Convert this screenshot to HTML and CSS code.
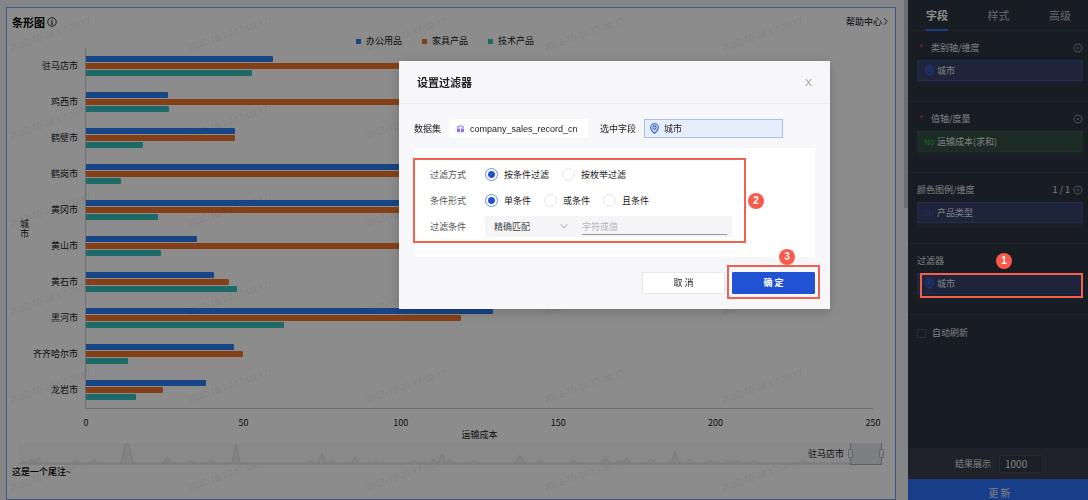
FILE: index.html
```html
<!DOCTYPE html>
<html lang="zh-CN">
<head>
  <meta charset="UTF-8" />
  <meta name="viewport" content="width=device-width, initial-scale=1.0" />
  <title>条形图</title>
  <link rel="stylesheet" href="styles.css">
</head>
<body>

  <svg class="defs" width="0" height="0" aria-hidden="true">
    <symbol id="pin" viewBox="0 0 16 16">
      <path d="M8 15C5 12.400 2.400 9.800 2.400 6.600a5.600 5.600 0 0 1 11.200 0C13.600 9.800 11 12.400 8 15z" fill="none" stroke="currentColor" stroke-width="1.500" />
      <circle cx="8" cy="6.600" r="2.400" fill="none" stroke="currentColor" stroke-width="1.500" />
    </symbol>
    <symbol id="gear" viewBox="0 0 16 16">
      <path d="M1 8l3.500-6h7L15 8l-3.500 6h-7z" fill="none" stroke="currentColor" stroke-width="1.500" stroke-linejoin="round" />
      <circle cx="8" cy="8" r="1.600" fill="currentColor" />
    </symbol>
  </svg>

  <div class="shell">
    <main class="canvas">
      <section class="card">
        <svg class="watermark" aria-hidden="true">
          <defs>
            <pattern id="mark" width="178" height="88" patternUnits="userSpaceOnUse">
              <text x="4" y="43" transform="rotate(-19 4 43)">2022-10-24 17:00:17</text>
            </pattern>
          </defs>
          <rect width="100%" height="100%" fill="url(#mark)" />
        </svg>

        <header class="card-head">
          <h1>条形图</h1>
          <svg class="info" viewBox="0 0 16 16" fill="none" stroke="currentColor" stroke-width="1.300">
            <circle cx="8" cy="8" r="6.800" />
            <path d="M8 7v4.500M8 4.300v1.600M6.600 7.200H8M6.500 11.500h3" />
          </svg>
          <a class="help" href="#">帮助中心
            <svg viewBox="0 0 6 10" fill="none" stroke="currentColor"><path d="M1 1l4 4-4 4" /></svg>
          </a>
        </header>

        <ul class="legend">
          <li><i class="office"></i>办公用品</li>
          <li><i class="home"></i>家具产品</li>
          <li><i class="tech"></i>技术产品</li>
        </ul>

        <div class="chart">
          <div class="y-title">城市</div>
          <div class="names" id="names"></div>
          <div class="plot" id="plot"></div>
          <div class="ticks">
            <span>0</span><span>50</span><span>100</span><span>150</span><span>200</span><span>250</span>
          </div>
          <div class="x-title">运输成本</div>
        </div>

        <div class="slider">
          <svg viewBox="0 0 863 22" preserveAspectRatio="none">
            <path id="trend" />
          </svg>
          <span class="slider-label">驻马店市</span>
          <div class="range"><i></i><i></i></div>
        </div>

        <footer class="note">这是一个尾注~</footer>
      </section>
      <div class="scroll-thumb"></div>
    </main>

    <aside class="side">
      <nav class="tabs">
        <a class="active" href="#">字段</a>
        <a href="#">样式</a>
        <a href="#">高级</a>
      </nav>

      <section class="group">
        <h2 class="required">类别轴/维度<svg><use href="#gear" /></svg></h2>
        <div class="drop"><div class="field"><svg class="geo"><use href="#pin" /></svg>城市</div></div>
      </section>

      <section class="group">
        <h2 class="required">值轴/度量<svg><use href="#gear" /></svg></h2>
        <div class="drop"><div class="field measure"><b>No</b>运输成本(求和)</div></div>
      </section>

      <section class="group">
        <h2>颜色图例/维度<small>1 / 1</small><svg><use href="#gear" /></svg></h2>
        <div class="drop"><div class="field"><b>Str</b>产品类型</div></div>
      </section>

      <section class="group">
        <h2>过滤器</h2>
        <div class="drop">
          <div class="field"><svg class="geo"><use href="#pin" /></svg>城市</div>
          <div class="callout callout-filter"></div>
          <span class="step step-filter">1</span>
        </div>
      </section>

      <label class="auto"><input type="checkbox">自动刷新</label>

      <div class="result">
        <label for="limit">结果展示</label>
        <input id="limit" type="text" value="1000">
      </div>
      <button class="update" type="button">更 新</button>
    </aside>
  </div>

  <div class="overlay">
    <div class="modal" role="dialog" aria-labelledby="modalTitle">
      <header class="modal-head">
        <h2 id="modalTitle">设置过滤器</h2>
        <button class="close" type="button" aria-label="关闭">
          <svg viewBox="0 0 10 10" fill="none" stroke="currentColor"><path d="M2 1l6 8M8 1L2 9" /></svg>
        </button>
      </header>

      <div class="source">
        <span>数据集</span>
        <div class="dataset">
          <svg viewBox="0 0 10 10">
            <path d="M1 3l3-2v2.500L1 4.500zM9 3L6 1v2.500l3 1z" fill="#a58df5" />
            <path d="M1 5h3.500v4.500L1 8.500zM9 5H5.500v4.500L9 8.500z" fill="#8f6ff0" />
            <path d="M4 .8h2v2.700H4z" fill="#c4b4fa" />
          </svg>
          company_sales_record_cn
        </div>
        <span>选中字段</span>
        <div class="picked"><svg><use href="#pin" /></svg>城市</div>
      </div>

      <form class="panel" id="filterForm">
        <div class="row">
          <span class="row-label">过滤方式</span>
          <label><input type="radio" name="mode" checked>按条件过滤</label>
          <label><input type="radio" name="mode">按枚举过滤</label>
        </div>
        <div class="row">
          <span class="row-label">条件形式</span>
          <label><input type="radio" name="logic" checked>单条件</label>
          <label><input type="radio" name="logic">或条件</label>
          <label><input type="radio" name="logic">且条件</label>
        </div>
        <div class="row">
          <label class="row-label" for="match">过滤条件</label>
          <div class="condition">
            <div class="select-wrap">
              <select id="match"><option>精确匹配</option></select>
              <svg viewBox="0 0 10 8" fill="none" stroke="currentColor"><path d="M1 1l4 5 4-5" /></svg>
            </div>
            <input type="text" placeholder="字符或值" aria-label="字符或值">
          </div>
        </div>
        <div class="callout callout-form"></div>
        <span class="step step-form">2</span>
      </form>

      <footer class="modal-foot">
        <button class="btn" type="button">取 消</button>
        <div class="confirm">
          <button class="btn primary" type="submit" form="filterForm">确 定</button>
          <div class="callout callout-ok"></div>
          <span class="step step-ok">3</span>
        </div>
      </footer>
    </div>
  </div>

  <script>
  const MAX = 250;
  const kinds = ['office', 'home', 'tech'];
  const rows = [
    ['驻马店市', 59.4, 160, 52.8],
    ['鸡西市', 26, 140, 26.3],
    ['鹤壁市', 47.3, 47.3, 18],
    ['鹤岗市', 130, 150, 11],
    ['黄冈市', 125, 170, 23],
    ['黄山市', 35.3, 145, 23.8],
    ['黄石市', 40.8, 45.4, 48],
    ['黑河市', 129.3, 119, 62.8],
    ['齐齐哈尔市', 47, 49.9, 13.3],
    ['龙岩市', 38.1, 24.4, 16]
  ];
  const names = document.getElementById('names');
  const plot = document.getElementById('plot');

  rows.forEach(([name, ...values]) => {
    names.insertAdjacentHTML('beforeend', `<span>${name}</span>`);
    const bars = values.map((v, i) => `<i class="${kinds[i]}" style="width:${v / MAX * 100}%"></i>`);
    plot.insertAdjacentHTML('beforeend', `<div class="bars">${bars.join('')}</div>`);
  });

  // overview line in the range slider: [x, height] of each peak
  const peaks = [
    [6, 3], [13, 5], [20, 6], [57, 3], [75, 5], [106, 20], [110, 20], [148, 7], [172, 3], [192, 4],
    [217, 20], [292, 3], [303, 11], [313, 3], [336, 6], [357, 4], [395, 3], [414, 5], [423, 10],
    [431, 5], [455, 3], [501, 9], [521, 4], [554, 3], [587, 6], [600, 4], [607, 6], [632, 5],
    [656, 13], [670, 5], [691, 4], [709, 5], [718, 3], [735, 3], [784, 4]
  ];
  let d = 'M0 21';
  let end = 0;
  peaks.forEach(([x, h]) => {
    const start = Math.max(x - 4, end);
    if (start < x - 1) d += `L${start} 20`;
    d += `L${x} ${21 - h}`;
    if (x !== 106) d += `L${x + 4} 20`;
    end = x + 4;
  });
  document.getElementById('trend').setAttribute('d', d + 'L863 20V21z');
  </script>

</body>
</html>
```
FILE: styles.css
```css
:root {
  --blue: #2152d4;
  --red: #f4604f;
  --office: #2d7ff5;
  --home: #f5762b;
  --tech: #35c2c0;
}
* {
  box-sizing: border-box;
}
body {
  margin: 0;
  font-family: "Noto Sans CJK SC", "Noto Sans", sans-serif;
  font-size: 9px;
  line-height: 14px;
  color: #222;
}
h1, h2, ul {
  margin: 0;
  padding: 0;
}
input, select, button {
  font: inherit;
  color: inherit;
}
a {
  color: inherit;
  text-decoration: none;
}
svg {
  display: block;
  flex: none;
}
.defs {
  position: absolute;
}
.shell {
  display: flex;
  height: 100vh;
  overflow: hidden;
}

/* chart card */
.canvas {
  position: relative;
  flex: 1;
  display: flex;
  padding: 7px 12px 0 6px;
  background: #f0f2f5;
}
.card {
  position: relative;
  flex: 1;
  display: flex;
  flex-direction: column;
  border: 1px solid #6f9df0;
  background: #fff;
}
.watermark {
  position: absolute;
  left: 0;
  top: 0;
  width: 100%;
  height: 100%;
}
.watermark text {
  font-family: "Noto Sans", sans-serif;
  font-size: 9px;
  fill: #000;
  fill-opacity: .08;
}
.card-head {
  display: flex;
  align-items: center;
  height: 27px;
  padding: 0 7px 0 5px;
  color: #000;
}
.card-head h1 {
  font-size: 11px;
  font-weight: 700;
}
.info {
  width: 10px;
  height: 10px;
  margin-left: 2px;
}
.help {
  display: flex;
  align-items: center;
  gap: 1px;
  margin-left: auto;
}
.help svg {
  width: 5px;
  height: 9px;
}
.legend {
  display: flex;
  justify-content: center;
  gap: 20px;
  height: 12px;
  padding-right: 12px;
  list-style: none;
}
.legend li {
  display: flex;
  align-items: center;
  gap: 5px;
}
.legend i {
  width: 5px;
  height: 5px;
}
.office { background: var(--office); }
.home { background: var(--home); }
.tech { background: var(--tech); }

.chart {
  display: grid;
  grid-template-columns: 12px 48px 1fr;
  margin: 1px 22px 0 11px;
}
.y-title {
  align-self: center;
  width: 9px;
  line-height: 10px;
  margin-left: 2px;
}
.names {
  display: flex;
  flex-direction: column;
  align-items: flex-end;
}
.names span {
  line-height: 36px;
  white-space: nowrap;
}
.plot {
  margin-left: 7px;
  border-left: 1px solid #c4c8d0;
  border-bottom: 1px solid #c4c8d0;
}
.bars {
  display: flex;
  flex-direction: column;
  justify-content: center;
  gap: 1px;
  height: 36px;
}
.bars i {
  height: 6px;
  border-radius: 0 1px 1px 0;
}
.ticks {
  grid-column: 3;
  display: flex;
  justify-content: space-between;
  margin: 7px 0 0 8px;
}
.ticks span {
  display: flex;
  justify-content: center;
  width: 0;
}
.x-title {
  grid-column: 3;
  line-height: 10px;
  padding-left: 8px;
  text-align: center;
}
.slider {
  display: flex;
  align-items: center;
  justify-content: flex-end;
  position: relative;
  height: 22px;
  margin: 3px 13px 0 12px;
  background: #f9f9fa;
}
.slider > svg {
  position: absolute;
  left: 0;
  top: 0;
  width: 100%;
  height: 100%;
  fill: #eceef1;
  stroke: #dcdfe4;
}
.slider-label {
  position: relative;
  margin-right: 6px;
}
.range {
  position: relative;
  display: flex;
  align-items: center;
  justify-content: space-between;
  width: 32px;
  height: 22px;
  background: #e3e7ee;
  border: 1px solid #a5adba;
  border-top: 0;
}
.range i {
  width: 5px;
  height: 9px;
  margin: 0 -3px;
  border: 1px solid #b4bac4;
  border-radius: 1px;
  background: #f5f6f8;
}
.note {
  padding: 0 5px;
  font-weight: 500;
  color: #000;
}
.scroll-thumb {
  position: absolute;
  top: 0;
  right: 0;
  width: 4px;
  height: 208px;
  background: #c6c8cc;
}

/* settings sidebar */
.side {
  display: flex;
  flex-direction: column;
  width: 180px;
  height: 100vh;
  background: #2d3340;
  color: #e2e5ea;
}
.tabs {
  display: flex;
  justify-content: space-between;
  flex: none;
  height: 31px;
  padding: 0 17px 0 18px;
  border-bottom: 1px solid #3a4050;
  font-size: 11px;
  line-height: 30px;
  color: #b8bcc5;
}
.tabs .active {
  height: 31px;
  border-bottom: 2px solid #2f6ff0;
  font-weight: 700;
  color: #fff;
}
.group {
  flex: none;
  height: 71px;
  padding: 9px 5px 0 9px;
  border-bottom: 1px solid #3a4050;
}
.group h2 {
  display: flex;
  align-items: center;
  height: 15px;
  margin-bottom: 5px;
  font-size: 9px;
  font-weight: 400;
}
.group h2 svg {
  width: 10px;
  height: 10px;
  margin-left: auto;
  color: #9297a3;
}
.group small {
  margin-left: auto;
  font-size: 9px;
}
.group small + svg {
  margin-left: 3px;
}
.required::before {
  content: "*";
  width: 12px;
  padding-left: 2px;
  color: #f03c46;
}
.drop {
  position: relative;
  height: 26px;
  background: #343a4a;
}
.field {
  display: flex;
  align-items: center;
  height: 21px;
  padding-left: 6px;
  border: 1px solid #394f92;
  background: #38436a;
}
.field b {
  width: 13px;
  font-size: 8px;
  font-weight: 400;
  color: #3158cc;
}
.geo {
  width: 11px;
  height: 11px;
  margin-right: 2px;
  color: #2f6bff;
}
.measure {
  border-color: #355a48;
  background: #344f45;
}
.measure b {
  color: #28b84a;
}
.auto {
  display: flex;
  align-items: center;
  gap: 6px;
  margin: 11px 9px;
}
.auto input {
  appearance: none;
  width: 9px;
  height: 9px;
  margin: 0;
  border: 1px solid #4a5060;
}
.result {
  display: flex;
  align-items: center;
  gap: 8px;
  flex: none;
  height: 31px;
  margin-top: auto;
  padding-left: 47px;
  background: #3a3f49;
}
.result input {
  width: 44px;
  height: 18px;
  padding: 0 5px;
  border: 1px solid #444955;
  background: #343944;
  font-size: 10px;
}
.update {
  flex: none;
  height: 28px;
  margin-bottom: -7px;
  padding: 0 0 0 3px;
  border: 0;
  background: #2f72fa;
  font-size: 10px;
}

/* filter dialog */
.overlay {
  position: fixed;
  inset: 0;
  z-index: 10;
  display: flex;
  justify-content: flex-end;
  align-items: flex-start;
  padding: 61px 258px 0 0;
  background: rgba(0, 0, 0, .45);
}
.modal {
  width: 431px;
  background: #f7f7fa;
  box-shadow: 0 3px 12px rgba(0, 0, 0, .2);
}
.modal-head {
  display: flex;
  align-items: center;
  justify-content: space-between;
  height: 43px;
  padding: 0 17px 0 18px;
  border-bottom: 1px solid #ececf1;
}
.modal-head h2 {
  font-size: 11px;
  font-weight: 700;
}
.close {
  padding: 0;
  border: 0;
  background: none;
  color: #888;
}
.close svg {
  width: 9px;
  height: 9px;
}
.source {
  display: flex;
  align-items: center;
  height: 19px;
  margin: 15px 15px 10px;
}
.dataset {
  display: flex;
  align-items: center;
  gap: 5px;
  width: 139px;
  height: 19px;
  margin: 0 12px 0 8px;
  padding-left: 7px;
  background: #fff;
  font-family: "Liberation Sans", sans-serif;
}
.dataset svg {
  width: 9px;
  height: 9px;
}
.picked {
  display: flex;
  align-items: center;
  gap: 4px;
  width: 139px;
  height: 19px;
  margin-left: 8px;
  padding-left: 4px;
  border: 1px solid #a9bff2;
  background: #e6edfb;
}
.picked svg {
  width: 11px;
  height: 11px;
  color: var(--blue);
}
.panel {
  position: relative;
  display: flex;
  flex-direction: column;
  gap: 5px;
  height: 109px;
  margin: 0 15px;
  padding: 16px 16px 14px;
  background: #fff;
}
.row {
  display: flex;
  align-items: center;
  height: 21px;
}
.row-label {
  width: 55px;
  color: #555;
}
.row label:not(.row-label) {
  display: flex;
  align-items: center;
  gap: 6px;
  margin-right: 13px;
}
.row input[type="radio"] {
  appearance: none;
  width: 13px;
  height: 13px;
  margin: 0;
  border: 1px solid #e2e3e8;
  border-radius: 50%;
  background: #fff;
}
.row input[type="radio"]:checked {
  border-color: #6b8ee8;
  background: radial-gradient(var(--blue) 3px, #fff 4px);
}
.condition {
  display: flex;
  align-items: center;
  width: 247px;
  height: 21px;
  padding-right: 5px;
  background: #f5f5f7;
}
.select-wrap {
  position: relative;
  width: 97px;
  color: #444;
}
.select-wrap select {
  appearance: none;
  width: 100%;
  height: 21px;
  padding: 0 9px;
  border: 0;
  background: none;
}
.select-wrap svg {
  position: absolute;
  top: 7px;
  right: 14px;
  width: 8px;
  height: 7px;
  color: #999;
}
.condition > input {
  flex: 1;
  min-width: 0;
  height: 17px;
  padding: 0;
  border: 0;
  border-bottom: 1px solid #999;
  background: none;
}
.condition > input::placeholder {
  color: #b4b4ba;
}
.modal-foot {
  display: flex;
  justify-content: flex-end;
  gap: 7px;
  padding: 15px;
}
.btn {
  display: block;
  width: 83px;
  height: 22px;
  padding: 0;
  border: 1px solid #e6e7ec;
  border-radius: 1px;
  background: #fff;
}
.primary {
  border-color: var(--blue);
  background: var(--blue);
  color: #fff;
  font-weight: 700;
}
.confirm {
  position: relative;
}

/* numbered callouts */
.callout {
  position: absolute;
  border: 2px solid var(--red);
  pointer-events: none;
}
.step {
  position: absolute;
  width: 16px;
  height: 16px;
  border-radius: 50%;
  background: #fb5a4b;
  color: #fff;
  font: bold 10px/16px "Liberation Sans", sans-serif;
  text-align: center;
}
.callout-filter {
  inset: 0 0 1px 3px;
  z-index: 20;
}
.step-filter {
  left: 79px;
  top: -20px;
  z-index: 20;
}
.callout-form {
  inset: 10px 69px 14px -1px;
}
.step-form {
  right: 51px;
  top: 45px;
}
.callout-ok {
  inset: -7px -5px -5px;
}
.step-ok {
  left: 47px;
  top: -23px;
}
```
